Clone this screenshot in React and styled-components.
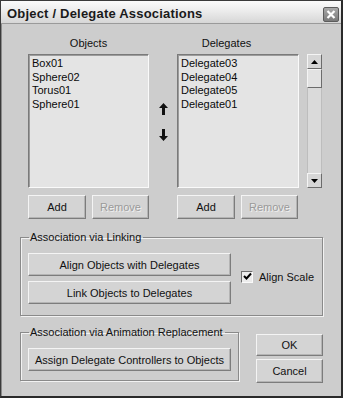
import React from "react";
import styled, { createGlobalStyle } from "styled-components";

const Global = createGlobalStyle`
  html, body { margin: 0; padding: 0; background: #ffffff; }
  body { font-family: "Liberation Sans", Arial, sans-serif; }
`;

const objects = ["Box01", "Sphere02", "Torus01", "Sphere01"];
const delegates = ["Delegate03", "Delegate04", "Delegate05", "Delegate01"];

const App = () => {
    return (
        <>
            <Global />
            <Window>
                <TitleBar>
                    <Title>Object / Delegate Associations</Title>
                    <CloseBtn>
                        <svg width="10" height="9" viewBox="0 0 10 9">
                            <path d="M1.5 1 L8.5 8 M8.5 1 L1.5 8" stroke="#fff" strokeWidth="2.2" />
                        </svg>
                    </CloseBtn>
                </TitleBar>
                <Body>
                    <ListsRow>
                        <Column width="121px">
                            <ColLabel>Objects</ColLabel>
                            <ListBox>
                                {objects.map((o) => (
                                    <Item key={o}>{o}</Item>
                                ))}
                            </ListBox>
                            <ButtonRow>
                                <Button width="58px" height="24px">Add</Button>
                                <Button width="57px" height="24px" disabled>
                                    Remove
                                </Button>
                            </ButtonRow>
                        </Column>
                        <Arrows>
                            <svg width="9" height="12" viewBox="0 0 9 12">
                                <path d="M4.5 0 L9 5 L6 5 L6 12 L3 12 L3 5 L0 5 Z" fill="#111" />
                            </svg>
                            <svg width="9" height="12" viewBox="0 0 9 12">
                                <path d="M4.5 12 L9 7 L6 7 L6 0 L3 0 L3 7 L0 7 Z" fill="#111" />
                            </svg>
                        </Arrows>
                        <Column width="145px">
                            <ColLabel shift="-23px">Delegates</ColLabel>
                            <ListWithScroll>
                                <ListBox width="122px">
                                    {delegates.map((d) => (
                                        <Item key={d}>{d}</Item>
                                    ))}
                                </ListBox>
                                <ScrollBar>
                                    <ScrollBtn>
                                        <svg width="7" height="4" viewBox="0 0 7 4">
                                            <path d="M0 4 L3.5 0 L7 4 Z" fill="#000" />
                                        </svg>
                                    </ScrollBtn>
                                    <Thumb />
                                    <Track />
                                    <ScrollBtn>
                                        <svg width="7" height="4" viewBox="0 0 7 4">
                                            <path d="M0 0 L3.5 4 L7 0 Z" fill="#000" />
                                        </svg>
                                    </ScrollBtn>
                                </ScrollBar>
                            </ListWithScroll>
                            <ButtonRow>
                                <Button width="58px" height="24px">Add</Button>
                                <Button width="57px" height="24px" disabled>
                                    Remove
                                </Button>
                            </ButtonRow>
                        </Column>
                    </ListsRow>

                    <Group height="85px">
                        <GroupLabel>Association via Linking</GroupLabel>
                        <GroupInner>
                            <Stack>
                                <Button width="203px" height="23px">Align Objects with Delegates</Button>
                                <Button width="203px" height="23px">Link Objects to Delegates</Button>
                            </Stack>
                            <CheckRow>
                                <CheckBox>
                                    <svg width="9" height="9" viewBox="0 0 9 9">
                                        <path d="M1 4 L3.5 6.5 L8 1.5" stroke="#000" strokeWidth="2" fill="none" />
                                    </svg>
                                </CheckBox>
                                <span>Align Scale</span>
                            </CheckRow>
                        </GroupInner>
                    </Group>

                    <BottomRow>
                        <Group width="219px" height="55px">
                            <GroupLabel>Association via Animation Replacement</GroupLabel>
                            <GroupInner>
                                <Button width="203px" height="23px">Assign Delegate Controllers to Objects</Button>
                            </GroupInner>
                        </Group>
                        <Stack gap="3px" top="8px">
                            <Button width="67px" height="22px">OK</Button>
                            <Button width="67px" height="24px">Cancel</Button>
                        </Stack>
                    </BottomRow>
                </Body>
            </Window>
        </>
    );
};

export default App;

const Window = styled.div`
  width: 343px;
  height: 398px;
  box-sizing: border-box;
  background: #cdcdcd;
  border: 1px solid #3a3a3a;
  border-right: 2px solid #2a2a2a;
  border-bottom: 2px solid #2a2a2a;
  display: flex;
  flex-direction: column;
  overflow: hidden;
`;

const TitleBar = styled.div`
  height: 22px;
  flex: none;
  display: flex;
  align-items: center;
  justify-content: space-between;
  padding: 0 2px 0 6px;
  background: linear-gradient(to bottom, #fbfbfb 0%, #ececec 45%, #d6d6d6 100%);
  border-bottom: 1px solid #9a9a9a;
`;

const Title = styled.div`
  font-weight: bold;
  font-size: 13px;
  color: #1a1a1a;
  letter-spacing: 0.2px;
  padding-top: 2px;
`;

const CloseBtn = styled.div`
  width: 16px;
  height: 15px;
  margin-top: 4px;
  box-sizing: border-box;
  background: linear-gradient(to bottom, #a9a9a9, #7a7a7a);
  border: 1px solid #5c5c5c;
  border-radius: 2px;
  display: flex;
  align-items: center;
  justify-content: center;
`;

const Body = styled.div`
  flex: 1;
  display: flex;
  flex-direction: column;
  padding: 0 0 0 18px;
  border-left: 1px solid #8a8a8a;
`;

const ListsRow = styled.div`
  display: flex;
  padding: 13px 0 0 8px;
  height: 207px;
  box-sizing: border-box;
`;

const Column = styled.div`
  width: ${(p) => p.width};
  display: flex;
  flex-direction: column;
`;

const ColLabel = styled.div`
  font-size: 11px;
  color: #111;
  text-align: center;
  height: 17px;
  transform: translateX(${(p) => p.shift || "0px"});
`;

const ListBox = styled.div`
  width: ${(p) => p.width || "100%"};
  height: 134px;
  box-sizing: border-box;
  background: #e4e4e4;
  border-top: 1px solid #7a7a7a;
  border-left: 1px solid #7a7a7a;
  border-right: 1px solid #fafafa;
  border-bottom: 1px solid #fafafa;
  box-shadow: inset 1px 1px 0 #9c9c9c;
  padding: 2px 0 0 3px;
`;

const Item = styled.div`
  font-size: 11px;
  line-height: 13.5px;
  color: #0a0a0a;
`;

const ButtonRow = styled.div`
  display: flex;
  gap: 6px;
  margin-top: 7px;
`;

const Button = styled.div`
  width: ${(p) => p.width};
  height: ${(p) => p.height};
  box-sizing: border-box;
  display: flex;
  align-items: center;
  justify-content: center;
  font-size: 11px;
  color: ${(p) => (p.disabled ? "#9a9a9a" : "#111")};
  text-shadow: ${(p) => (p.disabled ? "1px 1px 0 #f0f0f0" : "none")};
  background: #d4d4d4;
  border-top: 1px solid #f4f4f4;
  border-left: 1px solid #f4f4f4;
  border-right: 1px solid #7c7c7c;
  border-bottom: 1px solid #7c7c7c;
  box-shadow: inset -1px -1px 0 #b4b4b4;
  white-space: nowrap;
`;

const Arrows = styled.div`
  width: 28px;
  display: flex;
  flex-direction: column;
  align-items: center;
  padding-top: 66px;
  gap: 14px;
`;

const ListWithScroll = styled.div`
  display: flex;
  gap: 8px;
`;

const ScrollBar = styled.div`
  width: 15px;
  height: 134px;
  display: flex;
  flex-direction: column;
`;

const ScrollBtn = styled.div`
  height: 15px;
  flex: none;
  box-sizing: border-box;
  background: #d6d6d6;
  border-top: 1px solid #f4f4f4;
  border-left: 1px solid #f4f4f4;
  border-right: 1px solid #6c6c6c;
  border-bottom: 1px solid #6c6c6c;
  display: flex;
  align-items: center;
  justify-content: center;
`;

const Thumb = styled(ScrollBtn)`
  height: 19px;
  background: #e2e2e2;
`;

const Track = styled.div`
  flex: 1;
  background: #dadada;
  border-left: 1px solid #bdbdbd;
  border-right: 1px solid #bdbdbd;
`;

const Group = styled.fieldset`
  margin: 0;
  width: ${(p) => p.width || "303px"};
  height: ${(p) => p.height};
  box-sizing: border-box;
  border: 1px solid #8a8a8a;
  box-shadow: 1px 1px 0 #f2f2f2, inset 1px 1px 0 #f2f2f2;
  padding: 0 0 0 7px;
`;

const GroupLabel = styled.legend`
  font-size: 11px;
  color: #111;
  padding: 0 2px 0 1px;
  margin-left: 1px;
  line-height: 13px;
`;

const GroupInner = styled.div`
  display: flex;
  align-items: center;
  gap: 10px;
  margin-top: 9px;
`;

const Stack = styled.div`
  display: flex;
  flex-direction: column;
  gap: ${(p) => p.gap || "5px"};
  margin-top: ${(p) => p.top || "0px"};
`;

const CheckRow = styled.div`
  display: flex;
  align-items: center;
  gap: 6px;
  font-size: 11px;
  color: #111;
  margin-top: -4px;
`;

const CheckBox = styled.div`
  width: 12px;
  height: 12px;
  box-sizing: border-box;
  background: #ececec;
  border-top: 1px solid #6e6e6e;
  border-left: 1px solid #6e6e6e;
  border-right: 1px solid #fafafa;
  border-bottom: 1px solid #fafafa;
  display: flex;
  align-items: center;
  justify-content: center;
`;

const BottomRow = styled.div`
  display: flex;
  align-items: flex-start;
  gap: 17px;
  margin-top: 10px;
`;
